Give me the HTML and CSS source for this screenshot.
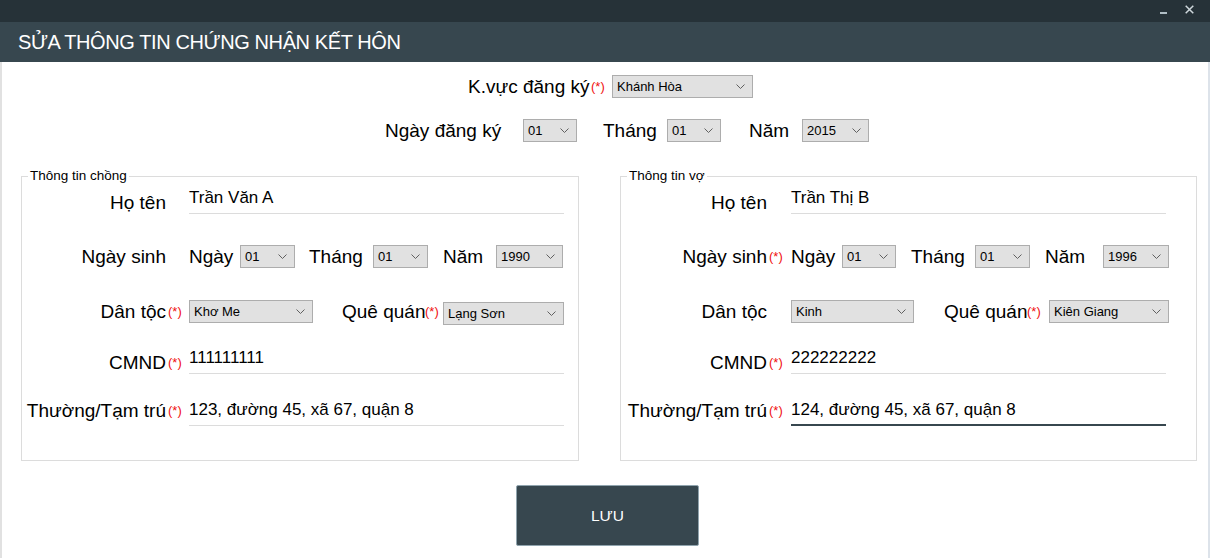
FILE: index.html
```html
<!DOCTYPE html>
<html lang="vi">
<head>
<meta charset="utf-8">
<title>Sửa thông tin chứng nhận kết hôn</title>
<link rel="stylesheet" href="styles.css">
</head>
<body>
<div class="window">
  <div class="topbar">
    <span class="ctl-min"></span>
    <svg class="ctl-close" width="9" height="9" viewBox="0 0 9 9"><path d="M0.7 0.7 L8.3 8.3 M8.3 0.7 L0.7 8.3" stroke="#cfd8dc" stroke-width="1.5" fill="none"/></svg>
  </div>
  <div class="titlebar"><h1 class="title">SỬA THÔNG TIN CHỨNG NHẬN KẾT HÔN</h1></div>
  <div class="main">
    <div class="reg-row reg-area">
      <span class="big-lbl w-kvuc">K.vực đăng ký</span><span class="req w-req-area">(*)</span>
      <div class="sel w-area"><span>Khánh Hòa</span><svg class="chev" width="9" height="5" viewBox="0 0 9 5"><path d="M0.5 0.5 L4.5 4.5 L8.5 0.5" fill="none" stroke="#606060"/></svg></div>
    </div>
    <div class="reg-row reg-date">
      <span class="big-lbl w-ngaydk">Ngày đăng ký</span>
      <div class="sel w-54"><span>01</span><svg class="chev" width="9" height="5" viewBox="0 0 9 5"><path d="M0.5 0.5 L4.5 4.5 L8.5 0.5" fill="none" stroke="#606060"/></svg></div>
      <span class="big-lbl w-thang-top">Tháng</span>
      <div class="sel w-54"><span>01</span><svg class="chev" width="9" height="5" viewBox="0 0 9 5"><path d="M0.5 0.5 L4.5 4.5 L8.5 0.5" fill="none" stroke="#606060"/></svg></div>
      <span class="big-lbl w-nam-top">Năm</span>
      <div class="sel w-67"><span>2015</span><svg class="chev" width="9" height="5" viewBox="0 0 9 5"><path d="M0.5 0.5 L4.5 4.5 L8.5 0.5" fill="none" stroke="#606060"/></svg></div>
    </div>

    <div class="groups">
      <fieldset class="group group-husband">
        <legend class="legend">Thông tin chồng</legend>
        <div class="row row-input row-first">
          <span class="lbl">Họ tên</span><span class="star"></span>
          <div class="inp">Trần Văn A</div>
        </div>
        <div class="row row-select row-dob">
          <span class="lbl">Ngày sinh</span><span class="star"></span>
          <span class="lbl-s w-ngay">Ngày</span>
          <div class="sel w-55"><span>01</span><svg class="chev" width="9" height="5" viewBox="0 0 9 5"><path d="M0.5 0.5 L4.5 4.5 L8.5 0.5" fill="none" stroke="#606060"/></svg></div>
          <span class="lbl-s w-thang ml-14">Tháng</span>
          <div class="sel w-55"><span>01</span><svg class="chev" width="9" height="5" viewBox="0 0 9 5"><path d="M0.5 0.5 L4.5 4.5 L8.5 0.5" fill="none" stroke="#606060"/></svg></div>
          <span class="lbl-s w-nam ml-15">Năm</span>
          <div class="sel w-67"><span>1990</span><svg class="chev" width="9" height="5" viewBox="0 0 9 5"><path d="M0.5 0.5 L4.5 4.5 L8.5 0.5" fill="none" stroke="#606060"/></svg></div>
        </div>
        <div class="row row-select row-origin">
          <span class="lbl">Dân tộc</span><span class="star">(*)</span>
          <div class="sel w-124"><span>Khơ Me</span><svg class="chev" width="9" height="5" viewBox="0 0 9 5"><path d="M0.5 0.5 L4.5 4.5 L8.5 0.5" fill="none" stroke="#606060"/></svg></div>
          <span class="lbl-s w-que ml-29">Quê quán</span><span class="star star-que">(*)</span>
          <div class="sel w-121 sel-low"><span>Lạng Sơn</span><svg class="chev" width="9" height="5" viewBox="0 0 9 5"><path d="M0.5 0.5 L4.5 4.5 L8.5 0.5" fill="none" stroke="#606060"/></svg></div>
        </div>
        <div class="row row-input row-id">
          <span class="lbl">CMND</span><span class="star">(*)</span>
          <div class="inp">111111111</div>
        </div>
        <div class="row row-input row-addr">
          <span class="lbl">Thường/Tạm trú</span><span class="star">(*)</span>
          <div class="inp">123, đường 45, xã 67, quận 8</div>
        </div>
      </fieldset>

      <fieldset class="group group-wife">
        <legend class="legend">Thông tin vợ</legend>
        <div class="row row-input row-first">
          <span class="lbl">Họ tên</span><span class="star"></span>
          <div class="inp">Trần Thị B</div>
        </div>
        <div class="row row-select row-dob">
          <span class="lbl">Ngày sinh</span><span class="star">(*)</span>
          <span class="lbl-s w-ngay">Ngày</span>
          <div class="sel w-54"><span>01</span><svg class="chev" width="9" height="5" viewBox="0 0 9 5"><path d="M0.5 0.5 L4.5 4.5 L8.5 0.5" fill="none" stroke="#606060"/></svg></div>
          <span class="lbl-s w-thang ml-15">Tháng</span>
          <div class="sel w-55"><span>01</span><svg class="chev" width="9" height="5" viewBox="0 0 9 5"><path d="M0.5 0.5 L4.5 4.5 L8.5 0.5" fill="none" stroke="#606060"/></svg></div>
          <span class="lbl-s w-nam-r ml-15">Năm</span>
          <div class="sel w-66"><span>1996</span><svg class="chev" width="9" height="5" viewBox="0 0 9 5"><path d="M0.5 0.5 L4.5 4.5 L8.5 0.5" fill="none" stroke="#606060"/></svg></div>
        </div>
        <div class="row row-select row-origin">
          <span class="lbl">Dân tộc</span><span class="star"></span>
          <div class="sel w-123"><span>Kinh</span><svg class="chev" width="9" height="5" viewBox="0 0 9 5"><path d="M0.5 0.5 L4.5 4.5 L8.5 0.5" fill="none" stroke="#606060"/></svg></div>
          <span class="lbl-s w-que ml-30">Quê quán</span><span class="star star-que-r">(*)</span>
          <div class="sel w-120"><span>Kiên Giang</span><svg class="chev" width="9" height="5" viewBox="0 0 9 5"><path d="M0.5 0.5 L4.5 4.5 L8.5 0.5" fill="none" stroke="#606060"/></svg></div>
        </div>
        <div class="row row-input row-id">
          <span class="lbl">CMND</span><span class="star">(*)</span>
          <div class="inp">222222222</div>
        </div>
        <div class="row row-input row-addr">
          <span class="lbl">Thường/Tạm trú</span><span class="star">(*)</span>
          <div class="inp inp-focus">124, đường 45, xã 67, quận 8</div>
        </div>
      </fieldset>
    </div>

    <div class="actions">
      <button class="btn-save" type="button">LƯU</button>
    </div>
  </div>
</div>
</body>
</html>
```

FILE: styles.css
```css
* { box-sizing: border-box; }
html, body { margin: 0; padding: 0; }
body {
  width: 1210px;
  height: 558px;
  overflow: hidden;
  background: #fff;
  color: #000;
  font-family: "Liberation Sans", Arial, sans-serif;
}
.window { display: flex; flex-direction: column; height: 558px; }

/* top window bar */
.topbar {
  height: 22px;
  background: #263238;
  display: flex;
  justify-content: flex-end;
  align-items: flex-start;
  padding-right: 16px;
}
.ctl-min {
  width: 7px;
  height: 2px;
  margin-top: 12px;
  background: #b0bec5;
}
.ctl-close { margin-top: 5px; margin-left: 18px; }

/* title */
.titlebar {
  height: 40px;
  background: #37474f;
  padding-left: 18px;
}
.title {
  margin: 0;
  font-size: 20px;
  font-weight: normal;
  line-height: 40px;
  color: #fff;
  letter-spacing: -0.4px;
}

/* main area */
.main {
  flex: 1;
  background: #fff;
  border-left: 2px solid #e1e1e1;
  border-right: 2px solid #dde3ea;
  padding-top: 13px;
}

.reg-row { display: flex; align-items: center; height: 23px; }
.reg-area { padding-left: 466px; }
.reg-date { padding-left: 383px; margin-top: 21px; }

.big-lbl { font-size: 19px; line-height: 22px; white-space: nowrap; }
.w-kvuc { width: 123px; }
.w-req-area { width: 21px; }
.w-ngaydk { width: 138px; }
.w-thang-top { width: 64px; margin-left: 26px; }
.w-nam-top { width: 53px; margin-left: 28px; }

.req, .star {
  color: #f01010;
  font-size: 13px;
  line-height: 22px;
  white-space: nowrap;
}

/* combobox */
.sel {
  height: 23px;
  background: #e1e1e1;
  border: 1px solid #adadad;
  display: flex;
  align-items: center;
  justify-content: space-between;
  padding: 0 7px 0 4px;
  font-size: 13px;
  flex: none;
}
.sel span { line-height: 16px; white-space: nowrap; }
.chev { flex: none; }
.w-area { width: 141px; }
.w-54 { width: 54px; }
.w-55 { width: 55px; }
.w-66 { width: 66px; }
.w-67 { width: 67px; }
.w-120 { width: 120px; }
.w-121 { width: 121px; }
.w-123 { width: 123px; }
.w-124 { width: 124px; }

/* group boxes */
.groups {
  display: flex;
  padding-left: 19px;
  margin-top: 26px;
  gap: 41px;
}
.group {
  margin: 0;
  padding: 4px 0 34px 0;
  border: 1px solid #dcdcdc;
  min-width: 0;
}
.group-husband { width: 558px; }
.group-wife { width: 577px; }
.legend {
  font-size: 13.5px;
  line-height: 16px;
  padding: 0 2px;
  margin-left: 6px;
}

.row { display: flex; }
.row-input { height: 26px; align-items: flex-end; }
.row-select { height: 23px; align-items: center; }
.row-addr { align-items: flex-start; }
.row-dob { margin-top: 31px; }
.row-origin { margin-top: 32px; }
.row-id { margin-top: 25px; }
.row-addr { margin-top: 26px; }

.lbl {
  font-size: 19px;
  line-height: 22px;
  text-align: right;
  white-space: nowrap;
  flex: none;
}
.group-husband .lbl { width: 144px; }
.group-wife .lbl { width: 146px; }
.star { flex: none; padding-left: 2px; }
.group-husband .star { width: 23px; }
.group-wife .star { width: 24px; }
.group-husband .star-que { width: 20px; }
.group-wife .star-que-r { width: 24px; }

.lbl-s { font-size: 19px; line-height: 22px; white-space: nowrap; flex: none; }
.w-ngay { width: 51px; }
.w-thang { width: 64px; }
.w-nam { width: 53px; }
.w-nam-r { width: 58px; }
.w-que { width: 81px; }
.ml-14 { margin-left: 14px; }
.ml-15 { margin-left: 15px; }
.ml-29 { margin-left: 29px; }
.ml-30 { margin-left: 30px; }
.sel-low { align-self: flex-start; margin-top: 2px; }

.inp {
  width: 375px;
  font-size: 17px;
  line-height: 20px;
  padding-bottom: 5px;
  border-bottom: 1px solid #dcdcdc;
  white-space: nowrap;
  flex: none;
}
.inp-focus { padding-bottom: 4px; border-bottom: 2px solid #37474f; }

/* save button */
.actions { margin-top: 24px; padding-left: 514px; }
.btn-save {
  width: 183px;
  height: 61px;
  background: #37474f;
  border: 1px solid #90a4ae;
  border-radius: 2px;
  color: #fff;
  font-family: "Liberation Sans", Arial, sans-serif;
  font-size: 15.5px;
  padding: 0;
}
```
